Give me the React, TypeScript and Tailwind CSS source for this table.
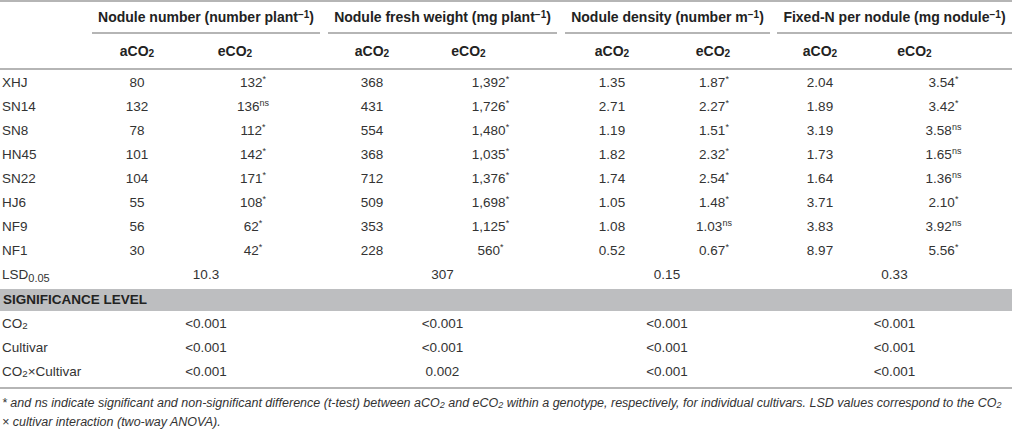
const cols = "grid grid-cols-[92px_90px_142px_96px_141px_102px_110px_94px_145px]";

type Cell = [string, string];

const rows: { name: string; v: Cell[] }[] = [
  { name: "XHJ", v: [["80", ""], ["132", "*"], ["368", ""], ["1,392", "*"], ["1.35", ""], ["1.87", "*"], ["2.04", ""], ["3.54", "*"]] },
  { name: "SN14", v: [["132", ""], ["136", "ns"], ["431", ""], ["1,726", "*"], ["2.71", ""], ["2.27", "*"], ["1.89", ""], ["3.42", "*"]] },
  { name: "SN8", v: [["78", ""], ["112", "*"], ["554", ""], ["1,480", "*"], ["1.19", ""], ["1.51", "*"], ["3.19", ""], ["3.58", "ns"]] },
  { name: "HN45", v: [["101", ""], ["142", "*"], ["368", ""], ["1,035", "*"], ["1.82", ""], ["2.32", "*"], ["1.73", ""], ["1.65", "ns"]] },
  { name: "SN22", v: [["104", ""], ["171", "*"], ["712", ""], ["1,376", "*"], ["1.74", ""], ["2.54", "*"], ["1.64", ""], ["1.36", "ns"]] },
  { name: "HJ6", v: [["55", ""], ["108", "*"], ["509", ""], ["1,698", "*"], ["1.05", ""], ["1.48", "*"], ["3.71", ""], ["2.10", "*"]] },
  { name: "NF9", v: [["56", ""], ["62", "*"], ["353", ""], ["1,125", "*"], ["1.08", ""], ["1.03", "ns"], ["3.83", ""], ["3.92", "ns"]] },
  { name: "NF1", v: [["30", ""], ["42", "*"], ["228", ""], ["560", "*"], ["0.52", ""], ["0.67", "*"], ["8.97", ""], ["5.56", "*"]] },
];

// per-column nudges so values sit where the source table puts them
const dataPad = ["", "", "", "", "", "pr-2", "", "pl-2"];

const groups = [
  { title: "Nodule number (number plant", unit: ")", line: "pr-1", ePad: "pr-9" },
  { title: "Nodule fresh weight (mg plant", unit: ")", line: "px-1", ePad: "pr-11" },
  { title: "Nodule density (number m", unit: ")", line: "pl-1 pr-[3px]", ePad: "pr-2.5" },
  { title: "Fixed-N per nodule (mg nodule", unit: ")", line: "pl-1", ePad: "pr-[50px]" },
];

const sig = [
  { label: "co2", v: ["<0.001", "<0.001", "<0.001", "<0.001"] },
  { label: "Cultivar", v: ["<0.001", "<0.001", "<0.001", "<0.001"] },
  { label: "co2x", v: ["<0.001", "0.002", "<0.001", "<0.001"] },
];

function CO2({ pre = "" }: { pre?: string }) {
  return (
    <span>
      {pre}CO<sub className="text-[0.72em] relative top-[1px]">2</sub>
    </span>
  );
}

function Line() {
  return <div className="h-[2px] bg-[#b5b5b5]" />;
}

export default function App() {
  return (
    <div className="w-[1012px] h-[431px] bg-white text-[#333] text-[13.5px] font-['Liberation_Sans',Arial,sans-serif] overflow-hidden">
      <Line />
      <div className={cols}>
        <div />
        {groups.map((g, i) => (
          <div key={i} className={`col-span-2 ${g.line}`}>
            <div className="h-[30px] flex items-center justify-center font-bold text-[14px] text-[#222] whitespace-nowrap">
              {g.title}
              <sup className="text-[10px] relative -top-[2px]">−1</sup>
              {g.unit}
            </div>
            <div className="h-[2px] bg-[#b5b5b5]" />
          </div>
        ))}
      </div>
      <div className={`${cols} h-[34px] items-center font-bold text-[14px] text-[#222]`}>
        <div />
        {groups.map((g, i) => [
          <div key={`a${i}`} className="text-center">
            <CO2 pre="a" />
          </div>,
          <div key={`e${i}`} className={`text-center ${g.ePad}`}>
            <CO2 pre="e" />
          </div>,
        ])}
      </div>
      <Line />
      <div className="pt-[1px]">
        {rows.map((r) => (
          <div key={r.name} className={`${cols} h-[24px] items-center`}>
            <div className="pl-[2px]">{r.name}</div>
            {r.v.map(([val, mark], j) => (
              <div key={j} className={`text-center ${dataPad[j]}`}>
                {val}
                {mark && <sup className="text-[9px]">{mark}</sup>}
              </div>
            ))}
          </div>
        ))}
        <div className={`${cols} h-[24px] items-center`}>
          <div className="pl-[2px]">
            LSD<sub className="text-[11px]">0.05</sub>
          </div>
          <div className="col-span-2 text-center pr-1">10.3</div>
          <div className="col-span-2 text-center">307</div>
          <div className="col-span-2 text-center">0.15</div>
          <div className="col-span-2 text-center pl-1">0.33</div>
        </div>
      </div>
      <div className="mt-[2px] h-[22px] bg-[#bdbec0] flex items-center pl-[3px] font-bold text-[#222]">
        SIGNIFICANCE LEVEL
      </div>
      <div className="pt-[1px]">
        {sig.map((s) => (
          <div key={s.label} className={`${cols} h-[24px] items-center`}>
            <div className="pl-[2px] whitespace-nowrap">
              {s.label === "co2" ? <CO2 /> : s.label === "co2x" ? <><CO2 />×Cultivar</> : s.label}
            </div>
            {s.v.map((val, j) => (
              <div key={j} className={`col-span-2 text-center ${j === 0 ? "pr-1" : j === 3 ? "pl-1" : ""}`}>
                {val}
              </div>
            ))}
          </div>
        ))}
      </div>
      <div className="mt-[3px]">
        <Line />
      </div>
      <div className="pt-[5px] pl-[2px] italic text-[12.5px] leading-[19px] text-[#333]">
        <div className="whitespace-nowrap">
          * and ns indicate significant and non-significant difference (t-test) between a<CO2 /> and e<CO2 /> within a genotype,
          respectively, for individual cultivars. LSD values correspond to the <CO2 />
        </div>
        <div>× cultivar interaction (two-way ANOVA).</div>
      </div>
    </div>
  );
}
